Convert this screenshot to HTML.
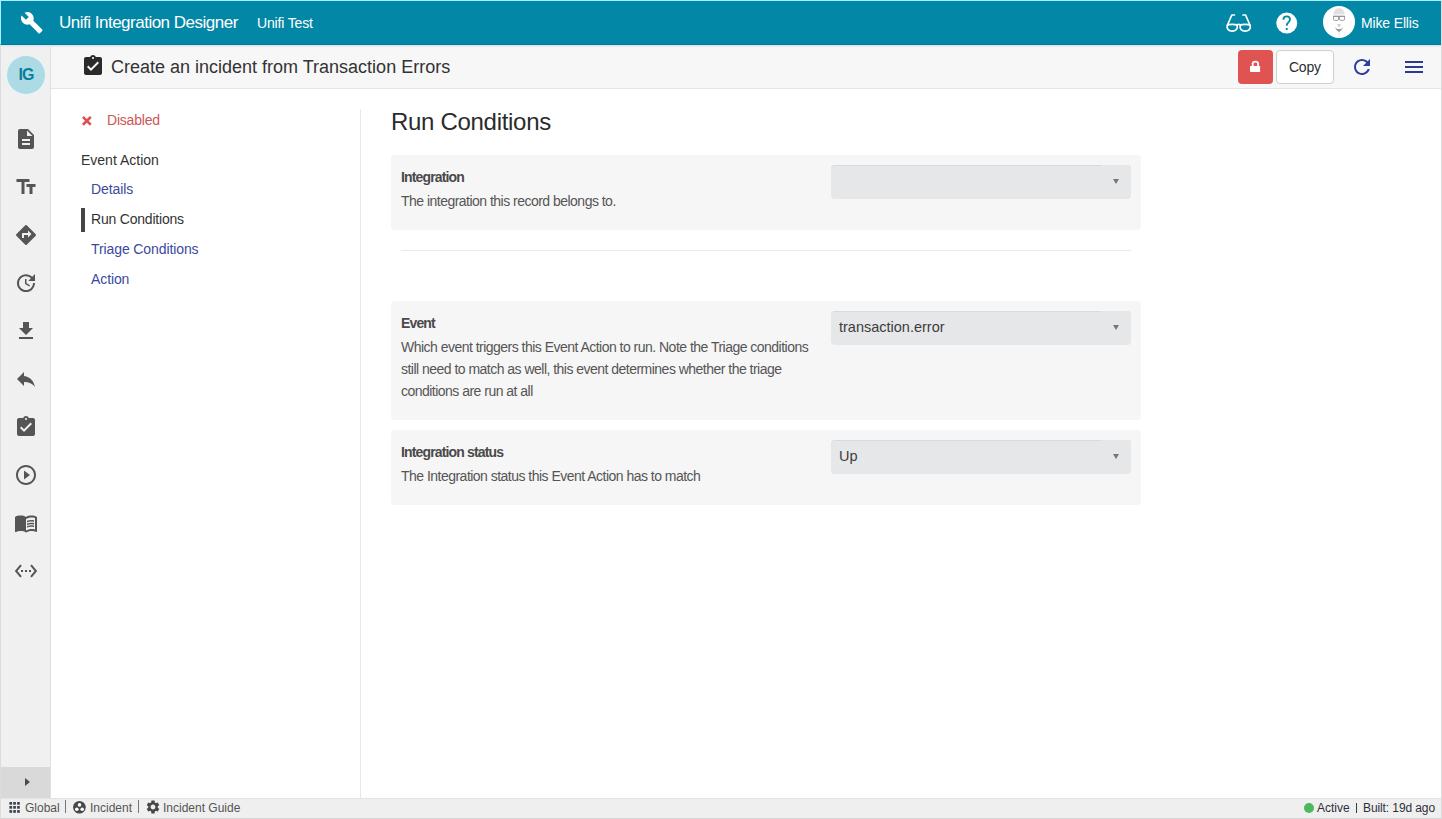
<!DOCTYPE html>
<html><head><meta charset="utf-8">
<style>
*{box-sizing:border-box;margin:0;padding:0}
html,body{width:1442px;height:819px;overflow:hidden;background:#fff;font-family:"Liberation Sans",sans-serif;}
.a{position:absolute;white-space:nowrap}
#frame{position:absolute;left:0;top:0;width:1442px;height:819px;border-left:1px solid #dcdcdc;border-right:1px solid #dcdcdc;border-bottom:1px solid #d4d4d4}
#hdr{position:absolute;left:0;top:0;width:1441px;height:45px;background:#0387a6;border-top:1px solid #a8f0ff;border-left:1px solid #a8f0ff;border-bottom:1px solid #17718a}
#hdrline{position:absolute;left:0;top:45px;width:1441px;height:1px;background:#c4eef8}
#hdrline2{position:absolute;left:1px;top:46px;width:1440px;height:1px;background:#e6eaec;z-index:1}
#side{position:absolute;left:1px;top:46px;width:50px;height:752px;background:#f0f0f0;border-right:1px solid #e0e0e0}
#sub{position:absolute;left:51px;top:46px;width:1390px;height:43px;background:#f7f7f7;border-bottom:1px solid #e6e6e6}
#foot{position:absolute;left:1px;top:798px;width:1440px;height:20px;background:#efefef;border-top:1px solid #e2e2e2}
.hw{color:#fff}
.nav{font-size:14px;line-height:20px;color:#3b4aa0;letter-spacing:-0.1px}
.card{position:absolute;left:391px;width:750px;background:#f6f6f6;border-radius:4px}
.lbl{font-size:14px;font-weight:bold;color:#4a4a4a;letter-spacing:-0.85px;line-height:20px}
.dsc{font-size:14px;color:#555;letter-spacing:-0.52px;line-height:22px}
.sel{position:absolute;left:831px;width:300px;height:34px;background:#e6e7e8;border-radius:4px;border-top:1px solid #d9dadb}
.sel::after{content:"";position:absolute;left:270px;top:-1px;width:30px;height:2px;background:#e6e7e8;border-top-right-radius:4px}
.sel .arr{position:absolute;left:282px;top:13px;width:0;height:0;border-left:3.5px solid transparent;border-right:3.5px solid transparent;border-top:5px solid #777}
.sel .v{position:absolute;left:8px;top:5px;font-size:14.5px;line-height:20px;color:#3d3d3d}
.ico{position:absolute;left:14px;width:24px;height:24px}
.ft{font-size:12px;line-height:16px;color:#555}
</style></head><body>
<div id="frame"></div>
<div id="hdr"></div>
<div id="hdrline"></div>
<div id="hdrline2"></div>

<!-- header content -->
<svg class="a" style="left:19.5px;top:11px" width="23.5" height="23.5" viewBox="0 0 24 24"><path fill="#fff" d="M22.7 19l-9.1-9.1c.9-2.3.4-5-1.5-6.9-2-2-5-2.4-7.4-1.3L9 6 6 9 1.6 4.7C.4 7.1.9 10.1 2.9 12.1c1.9 1.9 4.6 2.4 6.9 1.5l9.1 9.1c.4.4 1 .4 1.4 0l2.3-2.3c.5-.4.5-1.1.1-1.4z"/></svg>
<div class="a hw" style="left:59px;top:13px;font-size:17px;line-height:20px;letter-spacing:-0.5px">Unifi Integration Designer</div>
<div class="a hw" style="left:257px;top:13px;font-size:14px;line-height:20px;letter-spacing:-0.15px">Unifi Test</div>


<svg class="a" style="left:1220px;top:8px" width="40" height="30" viewBox="1220 8 40 30"><g fill="none" stroke="#fff" stroke-width="1.7" stroke-linejoin="round" stroke-linecap="round"><path d="M1227.2,25.4 C1228.4,23.9 1236,23.9 1237.2,25.4 C1238,29 1235.6,31.2 1232.2,31.2 C1228.8,31.2 1226.4,29 1227.2,25.4 Z"/><path d="M1240.2,25.4 C1241.4,23.9 1249,23.9 1250.2,25.4 C1251,29 1248.6,31.2 1245.2,31.2 C1241.8,31.2 1239.4,29 1240.2,25.4 Z"/><path d="M1227.5,25 L1231.8,15 L1234.4,15"/><path d="M1249.9,25 L1245.6,15 L1243,15"/><path d="M1236.9,24.8 Q1238.7,24 1240.5,24.8"/></g></svg>
<svg class="a" style="left:1272px;top:8px" width="30" height="30" viewBox="1272 8 30 30"><circle cx="1286.75" cy="23.05" r="10.5" fill="#fff"/><path d="M1283.4,19.7 C1283.4,17.6 1285,16.4 1286.7,16.4 C1288.6,16.4 1290,17.7 1290,19.4 C1290,21.8 1286.8,22.4 1286.7,25.6" fill="none" stroke="#0387a6" stroke-width="1.8" stroke-linecap="butt"/><rect x="1285.8" y="28" width="1.8" height="2" fill="#0387a6"/></svg>
<svg class="a" style="left:1321px;top:4px" width="36" height="36" viewBox="1321 4 36 36"><circle cx="1339" cy="21.9" r="16" fill="#fff"/><path d="M1333.4,14.6 C1333.4,10.2 1336,8.2 1339,8.2 C1342,8.2 1344.6,10.2 1344.6,14.6 Z" fill="#e0e0e0"/><path d="M1333,16.4 L1345.1,16.4" stroke="#8c8c8c" stroke-width="1.3"/><rect x="1333.5" y="16.4" width="5" height="3.9" rx="0.9" fill="none" stroke="#9c9c9c" stroke-width="1"/><rect x="1339.5" y="16.4" width="5" height="3.9" rx="0.9" fill="none" stroke="#9c9c9c" stroke-width="1"/><path d="M1337.3,24 L1340.8,24 L1340,26.8 L1338.1,26.8 Z" fill="#cfcfcf"/><path d="M1335,27.2 C1336.2,28.8 1337.6,29.1 1339,29.1 C1340.4,29.1 1341.8,28.8 1343,27.2 C1342.4,29.6 1340.6,31 1339,32.2 C1337.4,31 1335.6,29.6 1335,27.2 Z" fill="#9e9e9e"/><path d="M1338.4,32 L1339.6,32 L1339.4,37 L1338.6,37 Z" fill="#e6e6e6"/></svg>
<div class="a hw" style="left:1361px;top:13px;font-size:14px;line-height:20px;letter-spacing:-0.15px">Mike Ellis</div>

<!-- sidebar -->
<div id="side"></div>
<div class="a" style="left:7px;top:56px;width:38px;height:38px;border-radius:50%;background:#addbe5;color:#0b7e9b;font-weight:bold;font-size:16px;line-height:38px;text-align:center;letter-spacing:-1px;text-indent:0px;box-shadow:0 0 0 1px #e8f4f7">IG</div>
<svg class="a" style="left:14px;top:127px" width="24" height="24" viewBox="0 0 24 24"><path fill="#555" d="M14 2H6c-1.1 0-1.99.9-1.99 2L4 20c0 1.1.89 2 1.99 2H18c1.1 0 2-.9 2-2V8l-6-6zm2 16H8v-2h8v2zm0-4H8v-2h8v2zm-3-5V3.5L18.5 9H13z"/></svg>
<svg class="a" style="left:14px;top:175px" width="24" height="24" viewBox="0 0 24 24"><path fill="#555" d="M2.5 4v3h5v12h3V7h5V4h-13zm19 5h-9v3h3v7h3v-7h3V9z"/></svg>
<svg class="a" style="left:14px;top:223px" width="24" height="24" viewBox="0 0 24 24"><path fill="#555" d="M21.71 11.29l-9-9c-.39-.39-1.02-.39-1.41 0l-9 9c-.39.39-.39 1.02 0 1.41l9 9c.39.39 1.02.39 1.41 0l9-9c.39-.38.39-1.01 0-1.41zM14 14.5V12h-4v3H8v-4c0-.55.45-1 1-1h5V7.5l3.5 3.5-3.5 3.5z"/></svg>
<svg class="a" style="left:14px;top:271px" width="24" height="24" viewBox="0 0 24 24"><path fill="#555" d="M21 10.12h-6.78l2.74-2.82c-2.73-2.7-7.15-2.8-9.88-.1-2.73 2.71-2.73 7.08 0 9.79s7.15 2.71 9.88 0C18.32 15.65 19 14.08 19 12.1h2c0 1.98-.88 4.55-2.64 6.29-3.51 3.48-9.21 3.48-12.72 0-3.5-3.47-3.53-9.11-.02-12.58s9.14-3.47 12.65 0L21 3v7.12zM12.5 8v4.25l3.5 2.08-.72 1.21L11 13V8h1.5z"/></svg>
<svg class="a" style="left:14px;top:319px" width="24" height="24" viewBox="0 0 24 24"><path fill="#555" d="M19 9h-4V3H9v6H5l7 7 7-7zM5 18v2h14v-2H5z"/></svg>
<svg class="a" style="left:14px;top:367px" width="24" height="24" viewBox="0 0 24 24"><path fill="#555" d="M10 9V5l-7 7 7 7v-4.1c5 0 8.5 1.6 11 5.1-1-5-4-10-11-11z"/></svg>
<svg class="a" style="left:14px;top:415px" width="24" height="24" viewBox="0 0 24 24"><path fill="#555" d="M19 3h-4.18C14.4 1.84 13.3 1 12 1c-1.3 0-2.4.84-2.82 2H5c-1.1 0-2 .9-2 2v14c0 1.1.9 2 2 2h14c1.1 0 2-.9 2-2V5c0-1.1-.9-2-2-2zm-7 0c.55 0 1 .45 1 1s-.45 1-1 1-1-.45-1-1 .45-1 1-1zm-2 14l-4-4 1.41-1.41L10 14.17l6.59-6.59L18 9l-8 8z"/></svg>
<svg class="a" style="left:14px;top:463px" width="24" height="24" viewBox="0 0 24 24"><path fill="#555" d="M10 16.5l6-4.5-6-4.5v9zM12 2C6.48 2 2 6.48 2 12s4.48 10 10 10 10-4.48 10-10S17.52 2 12 2zm0 18c-4.41 0-8-3.59-8-8s3.59-8 8-8 8 3.59 8 8-3.59 8-8 8z"/></svg>
<svg class="a" style="left:14px;top:511px" width="24" height="24" viewBox="0 0 24 24"><path fill="#555" d="M21 5c-1.11-.35-2.33-.5-3.5-.5-1.95 0-4.05.4-5.5 1.5-1.45-1.1-3.55-1.5-5.5-1.5S2.45 4.9 1 6v14.65c0 .25.25.5.5.5.1 0 .15-.05.25-.05C3.1 20.45 5.05 20 6.5 20c1.95 0 4.05.4 5.5 1.5 1.35-.85 3.8-1.5 5.5-1.5 1.65 0 3.35.3 4.75 1.05.1.05.15.05.25.05.25 0 .5-.25.5-.5V6c-.6-.45-1.25-.75-2-1zm0 13.5c-1.1-.35-2.3-.5-3.5-.5-1.7 0-4.15.65-5.5 1.5V8c1.35-.85 3.8-1.5 5.5-1.5 1.2 0 2.4.15 3.5.5v11.5zM17.5 10.5c.88 0 1.73.09 2.5.26V9.24c-.79-.15-1.64-.24-2.5-.24-1.7 0-3.24.29-4.5.83v1.66c1.13-.64 2.7-.99 4.5-.99zM13 12.49v1.66c1.13-.64 2.7-.99 4.5-.99.88 0 1.73.09 2.5.26V11.9c-.79-.15-1.64-.24-2.5-.24-1.7 0-3.24.3-4.5.83zM17.5 14.33c-1.7 0-3.24.29-4.5.83v1.66c1.13-.64 2.7-.99 4.5-.99.88 0 1.73.09 2.5.26v-1.52c-.79-.16-1.64-.24-2.5-.24z"/></svg>
<svg class="a" style="left:14px;top:559px" width="24" height="24" viewBox="0 0 24 24"><path fill="#555" d="M7.77 6.76L6.23 5.48.82 12l5.41 6.52 1.54-1.28L3.42 12l4.35-5.24zM7 13h2v-2H7v2zm10-2h-2v2h2v-2zm-6 2h2v-2h-2v2zm6.77-7.52l-1.54 1.28L20.58 12l-4.35 5.24 1.54 1.28L23.18 12l-5.41-6.52z"/></svg>
<div class="a" style="left:1px;top:767px;width:49px;height:31px;background:#d9d9d9"></div>
<div class="a" style="left:25px;top:777.5px;width:0;height:0;border-top:4.75px solid transparent;border-bottom:4.75px solid transparent;border-left:5.5px solid #4a4a4a"></div>

<!-- subheader -->
<div id="sub"></div>
<div class="a" style="left:111px;top:55px;font-size:18px;line-height:24px;color:#333">Create an incident from Transaction Errors</div>
<div class="a" style="left:1238px;top:50px;width:35px;height:34px;background:#e05353;border-radius:4px"></div>

<svg class="a" style="left:81px;top:54px" width="24" height="24" viewBox="0 0 24 24"><path fill="#2a2a2a" d="M19 3h-4.18C14.4 1.84 13.3 1 12 1c-1.3 0-2.4.84-2.82 2H5c-1.1 0-2 .9-2 2v14c0 1.1.9 2 2 2h14c1.1 0 2-.9 2-2V5c0-1.1-.9-2-2-2zm-7 0c.55 0 1 .45 1 1s-.45 1-1 1-1-.45-1-1 .45-1 1-1zm-2 14l-4-4 1.41-1.41L10 14.17l6.59-6.59L18 9l-8 8z"/></svg>
<svg class="a" style="left:1244px;top:56px" width="22" height="22" viewBox="1244 56 22 22"><rect x="1250" y="65.9" width="10.1" height="6.2" rx="0.6" fill="#fff"/><path d="M1252.7,66.5 L1252.7,63.8 C1252.7,62.2 1253.8,61.6 1255.4,61.6 C1257,61.6 1258.1,62.2 1258.1,63.8 L1258.1,66.5" fill="none" stroke="#fff" stroke-width="1.8"/></svg>
<svg class="a" style="left:1349.5px;top:55px" width="24" height="24" viewBox="0 0 24 24"><path fill="#2f3f9e" d="M17.65 6.35C16.2 4.9 14.21 4 12 4c-4.42 0-7.99 3.58-7.99 8s3.57 8 7.99 8c3.730 0 6.84-2.55 7.73-6h-2.08c-.82 2.33-3.04 4-5.65 4-3.31 0-6-2.69-6-6s2.69-6 6-6c1.66 0 3.14.69 4.22 1.78L13 11h7V4l-2.35 2.35z"/></svg>
<svg class="a" style="left:1402px;top:55px" width="24" height="24" viewBox="0 0 24 24"><path fill="#2e3b8c" d="M3 18h18v-2H3v2zm0-5h18v-2H3v2zm0-7v2h18V6H3z"/></svg>
<div class="a" style="left:1276px;top:50px;width:58px;height:34px;background:#fff;border:1px solid #cfcfcf;border-radius:4px"></div>
<div class="a" style="left:1289px;top:57px;font-size:14px;line-height:20px;color:#2b2b33;letter-spacing:-0.25px">Copy</div>

<!-- left nav -->
<div class="a" style="left:360px;top:109px;width:1px;height:689px;background:#e8e8e8"></div>
<svg class="a" style="left:78px;top:110px" width="20" height="20" viewBox="78 110 20 20"><path d="M83.85,117.8 L89.85,123.8 M89.85,117.8 L83.85,123.8" stroke="#df4f4f" stroke-width="2.6" stroke-linecap="square"/></svg>
<div class="a" style="left:107px;top:110px;font-size:14px;line-height:20px;color:#cd5656;letter-spacing:-0.2px">Disabled</div>
<div class="a" style="left:81px;top:150px;font-size:14px;line-height:20px;color:#333">Event Action</div>
<div class="a nav" style="left:91px;top:179px">Details</div>
<div class="a" style="left:81px;top:208px;width:4px;height:24px;background:#454545"></div>
<div class="a nav" style="left:91px;top:209px;color:#333;letter-spacing:-0.2px">Run Conditions</div>
<div class="a nav" style="left:91px;top:239px">Triage Conditions</div>
<div class="a nav" style="left:91px;top:269px">Action</div>

<!-- main -->
<div class="a" style="left:391px;top:107px;font-size:24px;line-height:30px;color:#2b2b2b;letter-spacing:-0.3px">Run Conditions</div>

<div class="card" style="top:155px;height:75px"></div>
<div class="a lbl" style="left:401px;top:167px">Integration</div>
<div class="a dsc" style="left:401px;top:190px">The integration this record belongs to.</div>
<div class="sel" style="top:165px"><div class="arr"></div></div>

<div class="a" style="left:401px;top:250px;width:730px;height:1px;background:#e9e9e9"></div>

<div class="card" style="top:301px;height:119px"></div>
<div class="a lbl" style="left:401px;top:313px">Event</div>
<div class="a dsc" style="left:401px;top:336px">Which event triggers this Event Action to run. Note the Triage conditions<br>still need to match as well, this event determines whether the triage<br>conditions are run at all</div>
<div class="sel" style="top:311px"><div class="v">transaction.error</div><div class="arr"></div></div>

<div class="card" style="top:430px;height:75px"></div>
<div class="a lbl" style="left:401px;top:442px">Integration status</div>
<div class="a dsc" style="left:401px;top:465px">The Integration status this Event Action has to match</div>
<div class="sel" style="top:440px"><div class="v">Up</div><div class="arr"></div></div>

<!-- footer -->
<div id="foot"></div>

<svg class="a" style="left:6px;top:798px" width="20" height="20" viewBox="6 798 20 20"><g fill="#3d4250"><rect x="9.4" y="802" width="2.7" height="2.7"/><rect x="13.2" y="802" width="2.7" height="2.7"/><rect x="17.1" y="802" width="2.7" height="2.7"/><rect x="9.4" y="806" width="2.7" height="2.7"/><rect x="13.2" y="806" width="2.7" height="2.7"/><rect x="17.1" y="806" width="2.7" height="2.7"/><rect x="9.4" y="810.1" width="2.7" height="2.7"/><rect x="13.2" y="810.1" width="2.7" height="2.7"/><rect x="17.1" y="810.1" width="2.7" height="2.7"/></g></svg>
<svg class="a" style="left:70px;top:798px" width="20" height="20" viewBox="70 798 20 20"><circle cx="79.4" cy="807.2" r="6.3" fill="#474747"/><circle cx="79.5" cy="804.9" r="1.8" fill="#fff"/><circle cx="76.8" cy="809.2" r="1.8" fill="#fff"/><circle cx="82.2" cy="809.2" r="1.8" fill="#fff"/></svg>
<svg class="a" style="left:144.5px;top:799.3px" width="16" height="16" viewBox="0 0 24 24"><path fill="#474747" d="M19.14 12.94c.04-.3.06-.61.06-.94 0-.32-.02-.64-.07-.94l2.03-1.58c.18-.14.23-.41.12-.61l-1.92-3.32c-.12-.22-.37-.29-.59-.22l-2.39.96c-.5-.38-1.03-.7-1.62-.94l-.36-2.54c-.04-.24-.24-.41-.48-.41h-3.84c-.24 0-.43.17-.47.41l-.36 2.54c-.59.24-1.13.57-1.62.94l-2.39-.96c-.22-.08-.47 0-.59.22L2.74 8.87c-.12.21-.08.47.12.61l2.03 1.58c-.05.3-.09.63-.09.94s.02.64.07.94l-2.03 1.58c-.18.14-.23.41-.12.61l1.92 3.32c.12.22.37.29.59.22l2.39-.96c.5.38 1.03.7 1.62.94l.36 2.54c.05.24.24.41.48.41h3.84c.24 0 .44-.17.47-.41l.36-2.54c.59-.24 1.13-.56 1.62-.94l2.39.96c.22.08.47 0 .59-.22l1.92-3.32c.12-.22.07-.47-.12-.61l-2.01-1.58zM12 15.6c-1.98 0-3.6-1.62-3.6-3.6s1.62-3.6 3.6-3.6 3.6 1.62 3.6 3.6-1.62 3.6-3.6 3.6z"/></svg>
<div class="a ft" style="left:25px;top:800px">Global</div>
<div class="a" style="left:65px;top:800px;width:1px;height:13px;background:#777"></div>
<div class="a ft" style="left:90px;top:800px">Incident</div>
<div class="a" style="left:138px;top:800px;width:1px;height:13px;background:#777"></div>
<div class="a ft" style="left:163px;top:800px">Incident Guide</div>
<div class="a" style="left:1304px;top:803px;width:10px;height:10px;border-radius:50%;background:#4cb860"></div>
<div class="a ft" style="left:1317px;top:800px;color:#2f2f3a">Active</div>
<div class="a" style="left:1356px;top:803px;width:1px;height:10px;background:#3a3a46"></div>
<div class="a ft" style="left:1363px;top:800px;color:#2f2f3a;letter-spacing:-0.1px">Built: 19d ago</div>
</body></html>
